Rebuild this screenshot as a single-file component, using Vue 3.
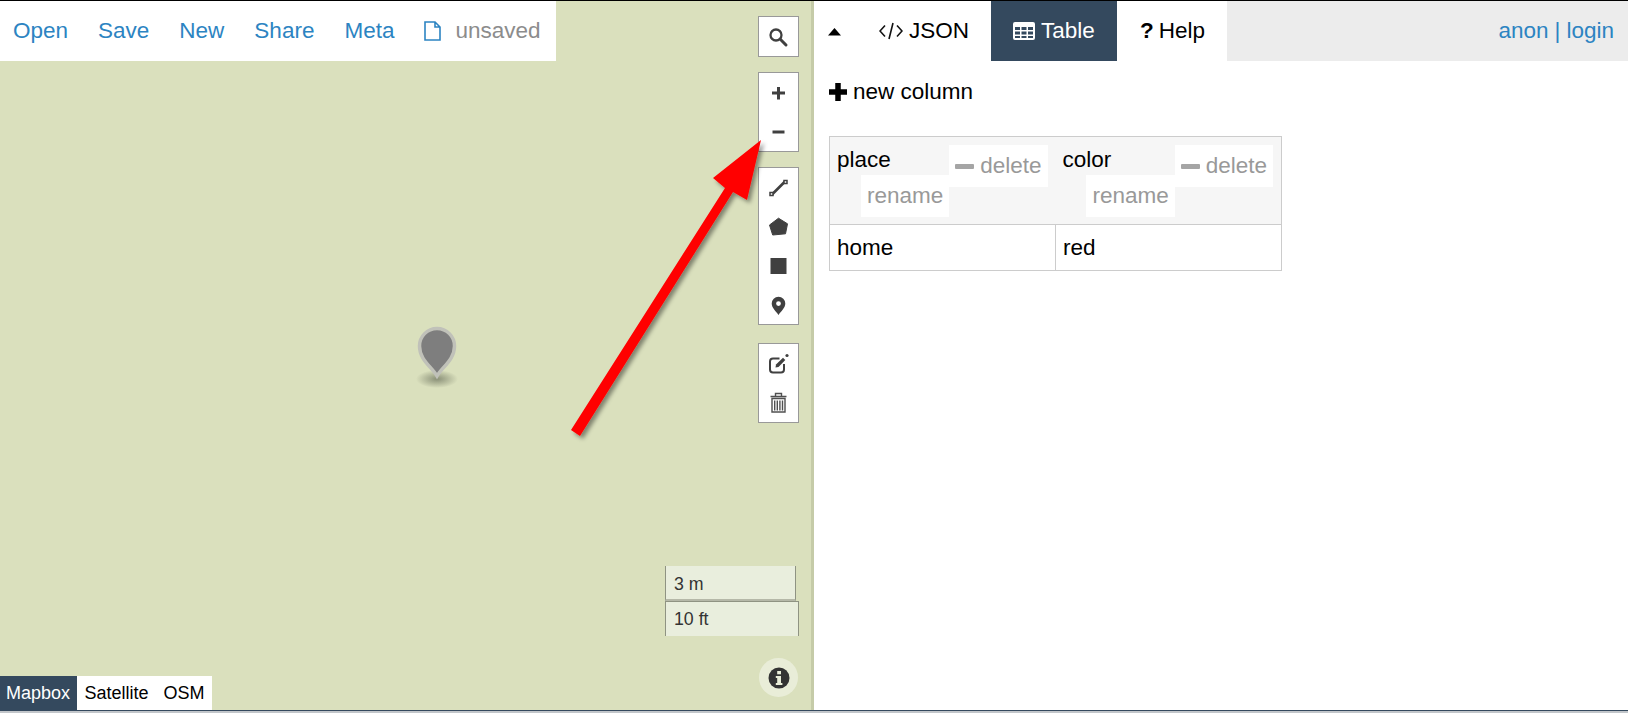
<script setup>
const navItems = ['Open', 'Save', 'New', 'Share', 'Meta']
const columns = ['place', 'color']
const rows = [['home', 'red']]
const layers = [
  { name: 'Mapbox', active: true },
  { name: 'Satellite', active: false },
  { name: 'OSM', active: false },
]
</script>

<template>
  <div class="app">
    <div class="main">
      <section class="map">
        <div class="topbar">
          <a v-for="item in navItems" :key="item" class="nav-link">{{ item }}</a>
          <span class="file">
            <svg class="doc-icon" width="17" height="20" viewBox="0 0 17 20">
              <path d="M1 1h10l5 5v13H1z M11 1v5h5" fill="none" stroke="#2c84c2" stroke-width="1.6" />
            </svg>
            <span class="unsaved">unsaved</span>
          </span>
        </div>

        <svg class="marker" width="60" height="70" viewBox="0 0 60 70">
          <defs>
            <radialGradient id="pin-shadow">
              <stop offset="0" stop-color="#6f7560" stop-opacity=".75" />
              <stop offset="1" stop-color="#6f7560" stop-opacity="0" />
            </radialGradient>
          </defs>
          <ellipse cx="30" cy="54" rx="21" ry="9" fill="url(#pin-shadow)" />
          <path d="M30 51 C25 42 12.500 35 12.500 21 A17.500 17.500 0 0 1 47.500 21 C47.500 35 35 42 30 51Z" fill="#7e7e7e" stroke="#c0c1b9" stroke-width="3.500" />
        </svg>

        <svg class="arrow" width="220" height="320" viewBox="0 0 220 320">
          <defs>
            <filter id="arrow-shadow" x="-10%" y="-10%" width="125%" height="125%">
              <feDropShadow dx="3" dy="3" stdDeviation="2.200" flood-color="#000" flood-opacity=".42" />
            </filter>
          </defs>
          <polygon points="201,10 187,70 173,62 20,306 11,300 165,58 153,48" fill="#ff0000" filter="url(#arrow-shadow)" />
        </svg>

        <div class="controls">
          <div class="ctrl-group">
            <button class="ctrl">
              <svg width="22" height="22" viewBox="0 0 22 22"><circle cx="9" cy="9" r="5.500" fill="none" stroke="#404040" stroke-width="2.300" /><path d="M13.300 13.300 L19 19" stroke="#404040" stroke-width="3" stroke-linecap="round" /></svg>
            </button>
          </div>
          <div class="ctrl-group">
            <button class="ctrl">
              <svg width="22" height="22" viewBox="0 0 22 22"><path d="M11.500 5v12.500M5 11h13" stroke="#404040" stroke-width="3" /></svg>
            </button>
            <button class="ctrl">
              <svg width="22" height="22" viewBox="0 0 22 22"><path d="M5.500 11h12" stroke="#404040" stroke-width="3" /></svg>
            </button>
          </div>
          <div class="ctrl-group">
            <button class="ctrl">
              <svg width="22" height="22" viewBox="0 0 22 22"><path d="M5 17.500 L18 4.500" stroke="#404040" stroke-width="2.600" /><rect x="3" y="15.500" width="3" height="3" fill="#fff" stroke="#404040" stroke-width="1.500" /><rect x="17" y="3.500" width="3" height="3" fill="#fff" stroke="#404040" stroke-width="1.500" /></svg>
            </button>
            <button class="ctrl">
              <svg width="22" height="22" viewBox="0 0 22 22"><path d="M11.500 2.200 L20.500 7.800 L18.500 17.800 L5.700 19 L2.500 9Z" fill="#404040" stroke="#404040" stroke-width="1" stroke-linejoin="round" /></svg>
            </button>
            <button class="ctrl">
              <svg width="22" height="22" viewBox="0 0 22 22"><rect x="3.500" y="3" width="16" height="16" fill="#404040" /></svg>
            </button>
            <button class="ctrl">
              <svg width="22" height="22" viewBox="0 0 22 22"><path fill-rule="evenodd" d="M11.500 21 C9 17.500 4.700 14 4.700 9.600 A6.800 6.800 0 0 1 18.300 9.600 C18.300 14 14 17.500 11.500 21Z M11.500 7.200 A2.400 2.400 0 1 0 11.500 12 A2.400 2.400 0 1 0 11.500 7.200Z" fill="#404040" /></svg>
            </button>
          </div>
          <div class="ctrl-group">
            <button class="ctrl">
              <svg width="22" height="22" viewBox="0 0 22 22"><path d="M12.500 5.500H6A3 3 0 0 0 3 8.500V16.500A3 3 0 0 0 6 19.500H14A3 3 0 0 0 17 16.500V11" fill="none" stroke="#404040" stroke-width="2" /><path d="M8.500 14.500 L9 11.500 L16 4.800 L18.300 7 L11.500 14Z" fill="#404040" /><circle cx="20" cy="2.500" r="1.600" fill="#404040" /></svg>
            </button>
            <button class="ctrl">
              <svg width="22" height="22" viewBox="0 0 22 22"><path d="M3.500 4.500h16M8.500 4V1.500h6V4M5 6.500h13V20H5zM7.700 8.500v10M10.300 8.500v10M12.900 8.500v10M15.500 8.500v10" fill="none" stroke="#505050" stroke-width="1.400" /></svg>
            </button>
          </div>
        </div>

        <div class="scale">
          <div class="scale-m">3 m</div>
          <div class="scale-ft">10 ft</div>
        </div>

        <div class="info">
          <svg width="22" height="22" viewBox="0 0 22 22">
            <circle cx="11" cy="11" r="10.500" fill="#333" />
            <rect x="9.200" y="4" width="3.800" height="3.300" fill="#e9edd8" />
            <path d="M7.800 9h5.200v7h1.400v2H7.800v-2h1.400v-5H7.800z" fill="#e9edd8" />
          </svg>
        </div>

        <div class="layers">
          <a v-for="layer in layers" :key="layer.name" class="layer" :class="{ active: layer.active }">{{ layer.name }}</a>
        </div>
      </section>

      <section class="panel">
        <header class="tabs">
          <span class="collapse"><svg width="13" height="8" viewBox="0 0 13 8"><path d="M6.500 0 L13 7.500 H0Z" fill="#000" /></svg></span>
          <a class="tab tab-json">
            <svg width="24" height="20" viewBox="0 0 24 20"><path d="M6 4.500 L1 10 L6 15.500 M18 4.500 L23 10 L18 15.500 M14 2 L10 18" fill="none" stroke="#111" stroke-width="1.600" /></svg>
            JSON
          </a>
          <a class="tab tab-table">
            <svg width="22" height="18" viewBox="0 0 22 18"><path fill-rule="evenodd" d="M2 0h18a2 2 0 0 1 2 2v14a2 2 0 0 1-2 2H2a2 2 0 0 1-2-2V2a2 2 0 0 1 2-2z M2 5v3h5V5z M8.500 5v3h5V5z M15 5v3h5V5z M2 9.500v3h5v-3z M8.500 9.500v3h5v-3z M15 9.500v3h5v-3z M2 14v2h5v-2z M8.500 14v2h5v-2z M15 14v2h5v-2z" fill="#fff" /></svg>
            Table
          </a>
          <a class="tab tab-help"><span class="q">?</span>Help</a>
          <div class="user"><a>anon</a><span class="sep">|</span><a>login</a></div>
        </header>

        <div class="content">
          <div class="new-col">
            <svg width="18" height="18" viewBox="0 0 18 18"><path d="M9 0v18M0 9h18" stroke="#000" stroke-width="5.500" /></svg>
            new column
          </div>
          <table class="data">
            <thead>
              <tr>
                <th v-for="col in columns" :key="col">
                  <div class="head-cell">
                    <div class="head-left">
                      <span class="col-name">{{ col }}</span>
                      <span class="col-btn rename">rename</span>
                    </div>
                    <span class="col-btn delete"><i class="dash"></i>delete</span>
                  </div>
                </th>
              </tr>
            </thead>
            <tbody>
              <tr v-for="(row, i) in rows" :key="i">
                <td v-for="(cell, j) in row" :key="j">{{ cell }}</td>
              </tr>
            </tbody>
          </table>
        </div>
      </section>
    </div>
  </div>
</template>

<style>
html, body { margin: 0; padding: 0; background: #fff; overflow: hidden; }
</style>

<style scoped>
.app {
  width: 1628px;
  height: 713px;
  display: flex;
  flex-direction: column;
  box-sizing: border-box;
  border-top: 1px solid #000;
  border-bottom: 2px solid #c2c6ca;
  font-family: "Liberation Sans", Arial, sans-serif;
  color: #000;
  overflow: hidden;
}
.main {
  flex: 1;
  min-height: 0;
  display: flex;
  border-bottom: 1px solid #34495e;
}
.map {
  position: relative;
  width: 814px;
  flex: none;
  box-sizing: border-box;
  background: #dae0bd;
  border-right: 3px solid #c5cba8;
}
.topbar {
  position: absolute;
  left: 0;
  top: 0;
  width: 556px;
  height: 60px;
  box-sizing: border-box;
  background: #fff;
  display: flex;
  align-items: center;
  gap: 30px;
  padding-left: 13px;
  font-size: 22.500px;
}
.nav-link { color: #2c84c2; }
.file { display: flex; align-items: center; gap: 14px; }
.unsaved { color: #8c8c8c; }
.marker { position: absolute; left: 407px; top: 324px; }
.arrow { position: absolute; left: 560px; top: 129px; z-index: 3; }
.controls {
  position: absolute;
  left: 758px;
  top: 15px;
  display: flex;
  flex-direction: column;
  gap: 15px;
}
.controls .ctrl-group:nth-child(4) { margin-top: 3px; }
.ctrl-group {
  width: 41px;
  box-sizing: border-box;
  background: #fff;
  border: 1px solid #999;
  display: flex;
  flex-direction: column;
}
.ctrl {
  width: 39px;
  height: 39px;
  box-sizing: border-box;
  padding: 0 1px 0 0;
  border: 0;
  background: transparent;
  display: flex;
  align-items: center;
  justify-content: center;
}
.scale {
  position: absolute;
  left: 665px;
  top: 565px;
  font-size: 17.760px;
  color: #333;
  display: flex;
  flex-direction: column;
}
.scale-m, .scale-ft {
  box-sizing: border-box;
  background: #e9eedd;
  border-left: 1px solid #8f9382;
  border-right: 1px solid #8f9382;
  display: flex;
  align-items: center;
}
.scale-m { width: 131px; height: 35px; padding: 3px 0 0 8px; border-bottom: 2px solid #b5b8a8; }
.scale-ft { width: 134px; height: 35px; padding-left: 8px; border-top: 1px solid #8f9382; }
.info {
  position: absolute;
  left: 759px;
  top: 657px;
  width: 39px;
  height: 39px;
  border-radius: 50%;
  background: #e9edd8;
  display: flex;
  align-items: center;
  justify-content: center;
}
.layers {
  position: absolute;
  left: 0;
  bottom: 0;
  height: 34px;
  background: #fff;
  display: flex;
  font-size: 18px;
}
.layer { padding: 0 7.500px; display: flex; align-items: center; color: #000; }
.layer.active { background: #34495e; color: #fff; padding: 0 7px 0 6px; }
.panel { flex: 1; display: flex; flex-direction: column; min-width: 0; }
.tabs {
  height: 60px;
  flex: none;
  display: flex;
  align-items: stretch;
  background: #ececec;
  font-size: 22.500px;
}
.collapse {
  width: 65px;
  background: #fff;
  display: flex;
  align-items: center;
  padding-left: 14px;
  box-sizing: border-box;
}
.collapse svg { margin-top: 1px; }
.tab { display: flex; align-items: center; box-sizing: border-box; }
.tab-json { width: 112px; background: #fff; color: #000; gap: 6px; }
.tab-table { width: 126px; background: #34495e; color: #fff; padding-left: 22px; gap: 6px; }
.tab-help { width: 110px; background: #fff; color: #000; padding-left: 23px; }
.q { font-weight: 700; margin-right: 5px; }
.user {
  margin-left: auto;
  padding-right: 14px;
  display: flex;
  align-items: center;
  gap: 6px;
  color: #2c84c2;
}
.sep { color: #2c84c2; }
.content { padding: 16px 15px; }
.new-col { display: flex; align-items: center; gap: 6px; font-size: 22.500px; height: 30px; }
.data {
  margin-top: 29px;
  width: 453px;
  border-collapse: collapse;
  table-layout: fixed;
  font-size: 22.500px;
}
.data th, .data td {
  padding: 0;
  border: 1px solid #ccc;
  text-align: left;
  font-weight: 400;
}
.data th { background: #f6f6f6; border-left: 0; border-right: 0; padding: 8px 8px 7px 7px; }
.data thead tr { border: 1px solid #ccc; }
.data td { padding: 0 7px; height: 45px; }
.head-cell { display: flex; }
.head-left { flex: 1; display: flex; flex-direction: column; align-items: flex-end; }
.col-name { align-self: flex-start; line-height: 30px; height: 30px; }
.col-btn {
  height: 42px;
  box-sizing: border-box;
  background: #fff;
  color: #999;
  display: flex;
  align-items: center;
  padding: 0 6px;
}
.dash { display: block; width: 19px; height: 5px; background: #a5a5a5; margin-right: 6px; border-radius: 1px; }
</style>
